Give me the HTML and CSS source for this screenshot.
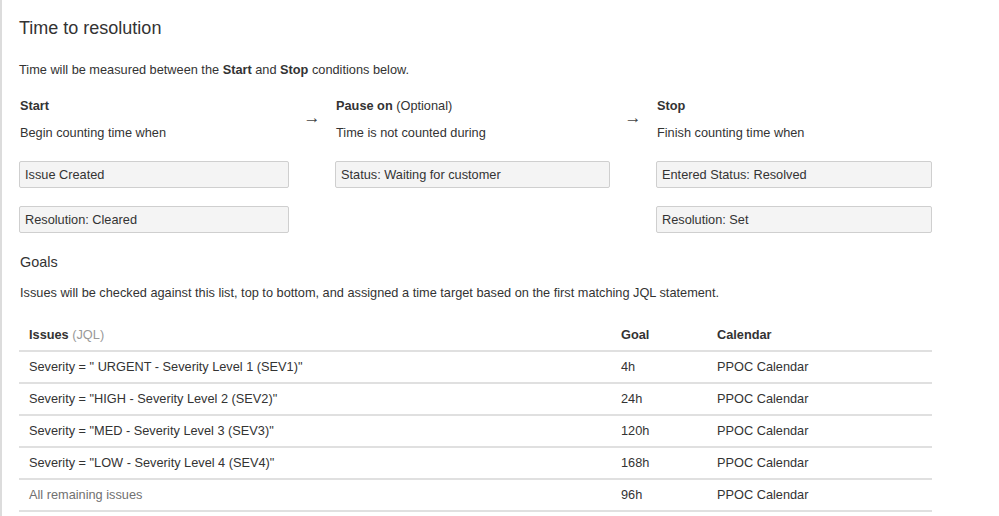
FILE: index.html
```html
<!DOCTYPE html>
<html>
<head>
<meta charset="utf-8">
<link rel="stylesheet" href="styles.css">
</head>
<body>
<div class="page">
  <h2 class="title">Time to resolution</h2>
  <p class="intro">Time will be measured between the <b>Start</b> and <b>Stop</b> conditions below.</p>

  <div class="conditions">
    <div class="col">
      <div class="col-head"><b>Start</b></div>
      <div class="col-desc">Begin counting time when</div>
      <div class="cond">Issue Created</div>
      <div class="cond">Resolution: Cleared</div>
    </div>
    <div class="arrow">→</div>
    <div class="col">
      <div class="col-head"><b>Pause on</b> (Optional)</div>
      <div class="col-desc">Time is not counted during</div>
      <div class="cond">Status: Waiting for customer</div>
    </div>
    <div class="arrow">→</div>
    <div class="col">
      <div class="col-head"><b>Stop</b></div>
      <div class="col-desc">Finish counting time when</div>
      <div class="cond">Entered Status: Resolved</div>
      <div class="cond">Resolution: Set</div>
    </div>
  </div>

  <h3 class="goals-title">Goals</h3>
  <p class="goals-intro">Issues will be checked against this list, top to bottom, and assigned a time target based on the first matching JQL statement.</p>

  <table class="goals">
    <colgroup>
      <col class="c-issues">
      <col class="c-goal">
      <col class="c-cal">
    </colgroup>
    <thead>
      <tr><th><b>Issues</b> <span class="muted">(JQL)</span></th><th>Goal</th><th>Calendar</th></tr>
    </thead>
    <tbody>
      <tr><td>Severity = " URGENT - Severity Level 1 (SEV1)"</td><td>4h</td><td>PPOC Calendar</td></tr>
      <tr><td>Severity = "HIGH - Severity Level 2 (SEV2)"</td><td>24h</td><td>PPOC Calendar</td></tr>
      <tr><td>Severity = "MED - Severity Level 3 (SEV3)"</td><td>120h</td><td>PPOC Calendar</td></tr>
      <tr><td>Severity = "LOW - Severity Level 4 (SEV4)"</td><td>168h</td><td>PPOC Calendar</td></tr>
      <tr><td class="remaining">All remaining issues</td><td>96h</td><td>PPOC Calendar</td></tr>
    </tbody>
  </table>
</div>
</body>
</html>
```
FILE: styles.css
```css
html, body {
  margin: 0;
  padding: 0;
  background: #fff;
}
body {
  font-family: "Liberation Sans", Arial, sans-serif;
  font-size: 12.75px;
  color: #333;
}
.page {
  border-left: 2px solid #dcdcdc;
  min-height: 516px;
  box-sizing: border-box;
  padding: 17px 0 0 17px;
}
.title {
  margin: 0;
  font-size: 18px;
  font-weight: normal;
  line-height: 22px;
  color: #333;
}
.intro {
  margin: 22px 0 0;
  line-height: 18px;
}
b { font-weight: bold; }
.conditions {
  margin-top: 18px;
  display: grid;
  grid-template-columns: 270px 46px 275px 46px 276px;
}
.col {
  display: flex;
  flex-direction: column;
}
.col-head {
  line-height: 18px;
  padding-left: 1px;
}
.col-desc {
  margin-top: 9px;
  line-height: 18px;
  padding-left: 1px;
}
.cond {
  margin-top: 19px;
  height: 25px;
  line-height: 25px;
  border: 1px solid #cfcfcf;
  border-radius: 2px;
  background: #f4f4f4;
  padding-left: 5px;
}
.cond + .cond {
  margin-top: 18px;
}
.arrow {
  text-align: center;
  padding-top: 12px;
  line-height: 18px;
  font-size: 17px;
  color: #444;
}
.goals-title {
  margin: 19px 0 0;
  font-size: 14.4px;
  font-weight: normal;
  line-height: 20px;
  padding-left: 1px;
}
.goals-intro {
  margin: 12px 0 0;
  line-height: 18px;
  padding-left: 1px;
}
.goals {
  margin-top: 17px;
  width: 913px;
  border-collapse: collapse;
  table-layout: fixed;
}
.c-issues { width: 592px; }
.c-goal { width: 96px; }
.c-cal { width: 225px; }
.goals th, .goals td {
  text-align: left;
  padding: 0 10px;
  height: 30px;
  line-height: 18px;
  border-bottom: 2px solid #e0e0e0;
  vertical-align: middle;
  font-size: 12.75px;
}
.goals th {
  font-weight: bold;
  height: 31px;
}
.muted {
  font-weight: normal;
  color: #999;
}
.remaining {
  color: #707070;
}
```
